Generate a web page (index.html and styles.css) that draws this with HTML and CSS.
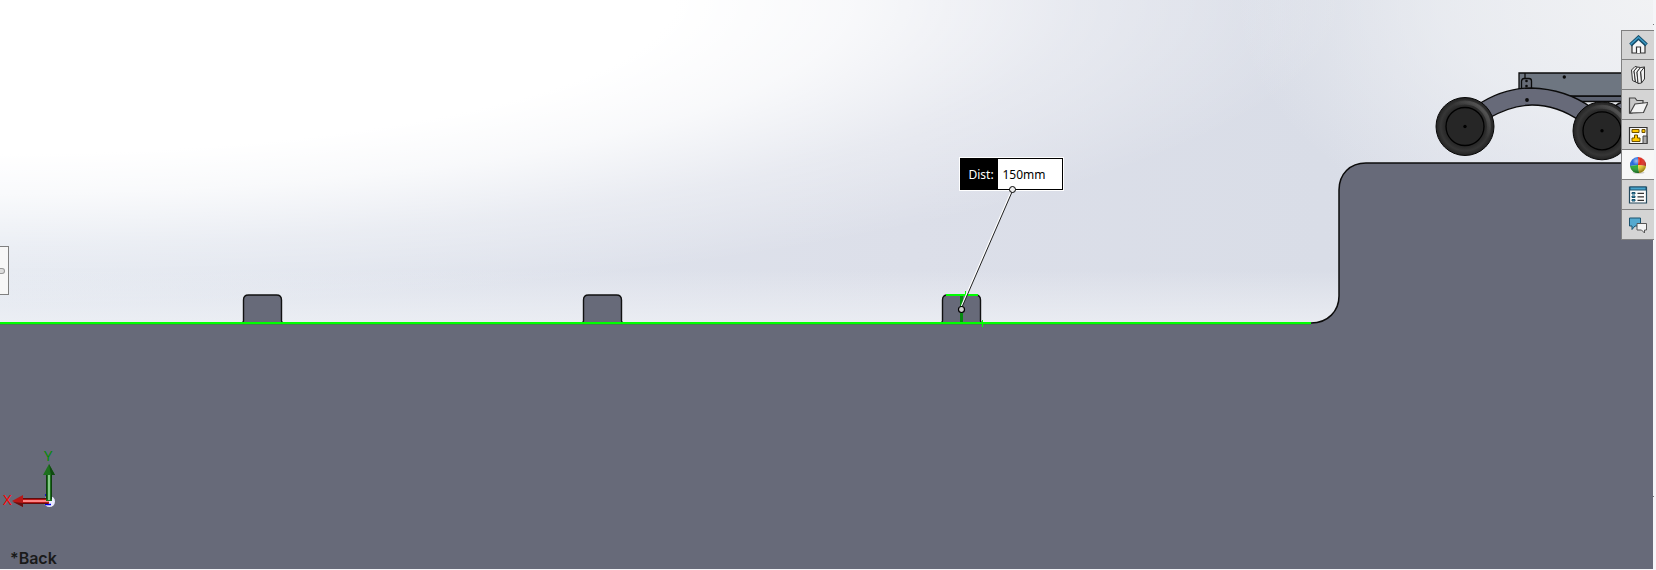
FILE: index.html
```html
<!DOCTYPE html>
<html lang="en">
<head>
<meta charset="utf-8">
<title>Model view</title>
<link rel="stylesheet" href="styles.css">
</head>
<body>
<main class="viewport">
  <svg class="scene" viewBox="0 0 1656 570" preserveAspectRatio="xMinYMin slice" role="img" aria-label="Rover on stepped ground">
    <defs>
      <radialGradient id="tyre" cx="50%" cy="50%" r="50%">
        <stop offset="0" stop-color="#262626"/><stop offset=".7" stop-color="#292929"/><stop offset=".84" stop-color="#363636"/><stop offset="1" stop-color="#222"/>
      </radialGradient>
      <linearGradient id="shine" x1="0" y1="1" x2="1" y2="0">
        <stop offset=".6" stop-color="#999" stop-opacity="0"/><stop offset=".86" stop-color="#aaa" stop-opacity=".25"/><stop offset="1" stop-color="#888" stop-opacity="0"/>
      </linearGradient>
      <g id="wheel">
        <circle r="29" fill="url(#tyre)" stroke="#080808"/>
        <circle r="24" fill="none" stroke="url(#shine)" stroke-width="4"/>
        <circle r="19" fill="#262626" stroke="#000" stroke-width="1.300"/>
        <circle r="1.700"/>
      </g>
      <path id="bump" d="M-20.500 28.500L-19 26V5Q-19 0-14 0H14Q19 0 19 5V26L20.500 28.500Z" fill="#676a79" stroke="#111" stroke-width="1.400"/>
    </defs>

    <rect x="1653" width="3" height="570" fill="#f5f5f8"/>
    <path d="M1653 24.500H1654M1653 496.500H1654" stroke="#777"/>
    <rect x="0" y="569" width="1656" height="1" fill="#f5f5f8"/>

    <!-- rover -->
    <g stroke="#0b0b0b" stroke-width="1.300">
      <path d="M1560 96H1640V101.500H1560Z" fill="#5c6271"/>
      <path d="M1613 109Q1616 102 1630 101V112Z" fill="#676a79"/>
      <path d="M1519 73H1640V96H1519Z" fill="#6e7681"/>
      <path d="M1525 73V78M1521.500 88V81Q1522 78.500 1524 78.500H1529Q1531.500 78.500 1531.500 81V88" fill="#666b76"/>
      <path d="M1476 106Q1502 88 1531 88Q1566 89 1592 108L1580 121Q1557 105 1532 105Q1511 105 1487 119Z" fill="#676a79"/>
      <g stroke="none" fill="#0b0b0b"><circle cx="1564.300" cy="77" r="1.700"/><circle cx="1527" cy="100" r="1.900"/><circle cx="1526.500" cy="81" r="1.300"/><circle cx="1526.500" cy="86" r="1.300"/></g>
    </g>
    <use href="#wheel" x="1465" y="126.500"/>
    <use href="#wheel" x="1602" y="130.800"/>

    <!-- ground -->
    <use href="#bump" x="262.500" y="295"/>
    <use href="#bump" x="602.500" y="295"/>
    <use href="#bump" x="961.500" y="295"/>
    <path d="M0 323H1311C1328 323 1339 311 1339 296V190C1339 174 1350 163 1366 163H1653V569H0Z" fill="#676a79"/>
    <path d="M1311 323C1328 323 1339 311 1339 296V190C1339 174 1350 163 1366 163H1653" fill="none" stroke="#0c0c0c" stroke-width="1.500"/>
    <path d="M0 324.500H1311" stroke="#4c7a52"/>
    <path d="M0 323H1311" stroke="#0f0" stroke-width="2"/>

    <!-- measured edge and leader -->
    <path d="M961.500 296V322" stroke="#078a10" stroke-width="3"/>
    <path d="M946 295H978" stroke="#0f0" stroke-width="2"/>
    <path d="M965.500 291V296M982.500 320V327" stroke="#0f0"/>
    <path d="M1011 192L961.500 306" stroke="#fff" stroke-width="1.400"/>
    <path d="M1012 192L962.500 306" stroke="#222" stroke-width="1"/>
    <circle cx="961.500" cy="309.500" r="3" fill="#ccc" stroke="#000" stroke-width="1.200"/>

    <!-- axis triad -->
    <g class="axis">
      <circle cx="49.500" cy="501.500" r="5.500" fill="#e9eaff"/>
      <path d="M45 495H50M45 504.500H51" stroke="#0000e6" stroke-width="1.500"/>
      <path d="M23 498H49V504H23Z" fill="#b01717"/><path d="M23 498.500H48M23 503.500H48" stroke="#600c0c"/><path d="M23 501H49" stroke="#ff8585" stroke-width="2"/>
      <path d="M12 501L23 495V507Z" fill="#b81818"/><path d="M13 502L23 507V503Z" fill="#641111"/>
      <path d="M46 475H52V501H46Z" fill="#1d6d1d"/><path d="M46.500 475V499M51.500 475V499" stroke="#0c400c"/><path d="M49 475V500" stroke="#85c987" stroke-width="2"/>
      <path d="M49 464L55 475H43Z" fill="#1d701d"/><path d="M49 464L55 475H51Z" fill="#0f4a10"/>
      <text x="3" y="505" fill="#f00">X</text>
      <text x="44" y="461" fill="#008a00">Y</text>
    </g>
  </svg>

  <div class="callout">
    <label class="callout-label" for="dist">Dist:</label>
    <input class="callout-value" id="dist" value="150mm">
    <span class="callout-grip"></span>
  </div>

  <button class="panel-tab" aria-label="Expand panel"><span class="panel-dot"></span></button>
  <p class="view-name">*Back</p>

  <nav class="taskpane" aria-label="Task pane">
    <button class="task" aria-label="Home"><svg viewBox="0 0 20 20"><path d="M4 9V18H17V9L10.500 3Z" fill="#f6f6f6" stroke="#333" stroke-width="1.200"/><path d="M8.500 18V12H12.500V18" fill="#fff" stroke="#333" stroke-width="1.200"/><path d="M2.500 10L10.500 2.500L18.500 10" fill="none" stroke="#174d69" stroke-width="3.800"/><path d="M2.500 9.500L10.500 2.200L18.500 9.500" fill="none" stroke="#3c9bc6" stroke-width="1.500"/></svg></button>
    <button class="task" aria-label="Design library"><svg viewBox="0 0 20 20"><g fill="#f2f2f2" stroke="#333" stroke-linejoin="round"><path d="M12.500 5L16.500 2V14L13.500 18Z"/><path d="M3.500 5L7 1.500L9.500 2L6 6L7.500 17L4.500 15.500Z"/><path d="M6 6L9.500 2L12.500 2.500L9 7L10 18L7.500 17Z"/><path d="M9 7L12.500 2.500L16.500 2L12.500 7L13.500 18L10 18.500Z"/></g></svg></button>
    <button class="task" aria-label="File explorer"><svg viewBox="0 0 20 20"><path d="M1.500 18V3H7L9 5.500H15V9L4 18Z" fill="#c8c8c8" stroke="#444" stroke-width="1.200"/><path d="M2 18L7 9L20 7.500L15.500 17.500Z" fill="#f3f3f3" stroke="#444" stroke-width="1.200"/></svg></button>
    <button class="task" aria-label="View palette"><svg viewBox="0 0 20 20"><path d="M1.500 2.500H19V18.500H1.500Z" fill="#fafafa" stroke="#333" stroke-width="1.200"/><path d="M4 4.500H11V7.500H4ZM14 4.500H17V7.500H14ZM6.500 10H9.500V13H12V16.500H4V13H6.500Z" fill="#ffc800" stroke="#6d5000"/><path d="M15 11H19V18.500H15Z" fill="#aaa" stroke="#444"/></svg></button>
    <button class="task task-active" aria-label="Appearances"><svg viewBox="0 0 20 20"><defs><radialGradient id="gloss" cx="40%" cy="25%" r="75%"><stop offset="0" stop-color="#fff" stop-opacity=".6"/><stop offset=".35" stop-color="#fff" stop-opacity="0"/><stop offset="1" stop-color="#000" stop-opacity=".45"/></radialGradient></defs><ellipse cx="10.500" cy="17.500" rx="6" ry="1.500" fill="#ccc"/><path d="M10 10V2A8 8 0 0 0 2 11Z" fill="#2468dc"/><path d="M10 10V2A8 8 0 0 1 18 11Z" fill="#e02b20"/><path d="M10 10L2 11A8 8 0 0 0 11 18Z" fill="#22ac2f"/><path d="M10 10L18 11A8 8 0 0 1 11 18Z" fill="#f4d322"/><circle cx="10" cy="10" r="8" fill="url(#gloss)"/></svg></button>
    <button class="task" aria-label="Custom properties"><svg viewBox="0 0 20 20"><path d="M1.500 2H18.500V18H1.500Z" fill="#fbfbfb" stroke="#24495d" stroke-width="1.200"/><path d="M2 2H18V5H2Z" fill="#47a3cc" stroke="#1c536e"/><path d="M4 7.500H7V9H4ZM4 11H7V12.500H4ZM4 14.500H7V16H4Z" fill="#4ba5cb" stroke="#174e68"/><path d="M9.500 8.300H16M9.500 11.800H16M9.500 15.300H16" stroke="#333" stroke-width="1.200"/></svg></button>
    <button class="task" aria-label="Forum"><svg viewBox="0 0 20 20"><path d="M1.500 3H12.500V11H7L4 14.500V11H1.500Z" fill="#55a9cf" stroke="#1a526e"/><path d="M9 8.500H18.500V15H16.500V18L13.500 15H9Z" fill="#f3f3f3" stroke="#555"/></svg></button>
  </nav>
</main>
</body>
</html>
```
FILE: styles.css
```css
* { box-sizing: border-box; }

body {
  margin: 0;
  font-family: "Noto Sans", "Open Sans", sans-serif;
}

.viewport {
  position: relative;
  height: 100vh;
  overflow: hidden;
  background:
    linear-gradient(to bottom, rgba(240, 242, 246, 0) 270px, rgba(240, 242, 246, 0.7) 324px),
    radial-gradient(ellipse 1250px 285px at 0 0, #fff 54%, rgba(255, 255, 255, 0.8) 68%, rgba(255, 255, 255, 0.35) 86%, rgba(255, 255, 255, 0) 108%),
    radial-gradient(ellipse 420px 260px at 100% 0, #f1f2f4 0%, rgba(238, 240, 243, 0.7) 50%, rgba(235, 237, 242, 0) 100%),
    linear-gradient(to right, #e1e6ef 0, #dcdfe9 55%, #d9dde7 80%, #dfe2ec 100%);
}

.scene {
  display: block;
  width: 100%;
  height: 100%;
}

.axis text {
  font-family: "Open Sans", sans-serif;
  font-size: 15px;
}

.callout {
  position: absolute;
  top: 158px;
  left: 58%;
  display: flex;
  width: 103px;
  height: 32px;
  border: 1px solid #000;
  outline: 1px solid #fff;
  background: #fff;
  font-size: 12px;
  line-height: 32px;
}

.callout-label {
  width: 37px;
  padding-left: 7px;
  background: #000;
  color: #fff;
}

.callout-value {
  flex: 1;
  min-width: 0;
  padding: 2px 0 0 4px;
  border: 0;
  background: #fff;
  color: #000;
  font: inherit;
}

.callout-grip {
  position: absolute;
  bottom: -4px;
  left: 48px;
  width: 7px;
  height: 7px;
  border: 1px solid #000;
  border-radius: 50%;
  background: #eee;
}

.panel-tab {
  position: absolute;
  top: 246px;
  left: 0;
  width: 9px;
  height: 49px;
  padding: 0;
  border: 1px solid #808080;
  border-left: 0;
  background: #f7f7f7;
}

.panel-dot {
  display: block;
  width: 5px;
  height: 6px;
  border: 1px solid #999;
  border-left: 0;
  border-radius: 0 3px 3px 0;
  background: #ddd;
}

.view-name {
  position: absolute;
  bottom: 0;
  left: 10px;
  margin: 0;
  color: #1a1a1a;
  font-family: Inter, sans-serif;
  font-size: 16px;
  font-weight: 600;
  line-height: 24px;
}

.taskpane {
  position: absolute;
  top: 30px;
  right: 2px;
  display: flex;
  flex-direction: column;
  width: 33px;
  border-left: 1px solid #808080;
}

.task {
  display: grid;
  place-items: center;
  height: 30px;
  padding: 0;
  border: 0;
  border-bottom: 1px solid #808080;
  background: #d4d4d4;
}

.task:first-child { border-top: 1px solid #808080; }

.task-active { background: #f7f7f7; }

.task svg {
  width: 20px;
  height: 20px;
}
```
